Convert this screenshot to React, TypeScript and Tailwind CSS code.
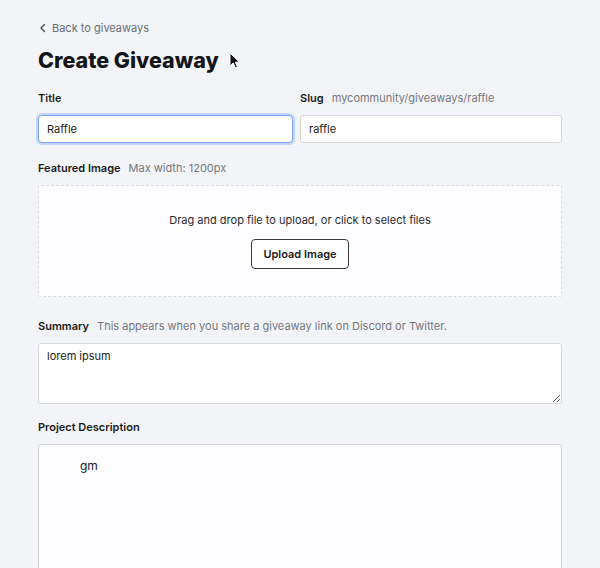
import React, { useState } from 'react';

const Label: React.FC<{ title: string; hint?: string }> = ({ title, hint }) => (
    <div className="flex items-baseline h-[17px] mb-[8px]">
        <span className="text-[11px] font-semibold text-[#1b1c20]">{title}</span>
        {hint && <span className="ml-[8px] text-[11px] text-[#75777f]">{hint}</span>}
    </div>
);

const App: React.FC = () => {
    const [title, setTitle] = useState('Raffle');
    const [slug, setSlug] = useState('raffle');
    const [summary, setSummary] = useState('lorem ipsum');

    return (
        <div className="bg-[#f3f4f8] font-['Inter',sans-serif] px-[38px] pt-[19px] overflow-hidden h-[568px]">
            {/* back link */}
            <div className="flex items-center h-[18px] text-[11px] text-[#6b6e76]">
                <svg width="8" height="10" viewBox="0 0 8 10" className="ml-[1px] mr-[5px]">
                    <path d="M5.5 1.5L2 5l3.5 3.5" fill="none" stroke="#55575e" strokeWidth="1.5" strokeLinecap="round" strokeLinejoin="round" />
                </svg>
                <span>Back to giveaways</span>
            </div>

            <div className="relative mt-[6px] h-[34px] flex items-center">
                <h1 className="text-[21.5px] font-extrabold text-[#141519]">Create Giveaway</h1>
                <svg width="12" height="18" viewBox="0 0 12 18" className="absolute left-[191px] top-[9px]">
                    <path d="M1 1v13l3.2-3 2.3 5 2-0.9-2.2-4.9H10.5z" fill="#111" stroke="#fff" strokeWidth="1" />
                </svg>
            </div>

            {/* title + slug */}
            <div className="grid grid-cols-[255px_1fr] gap-[7px] mt-[13px]">
                <div>
                    <Label title="Title" />
                    <input
                        value={title}
                        onChange={(e) => setTitle(e.target.value)}
                        className="w-full h-[28px] rounded-[4px] bg-white border border-[#7fa6e6] ring-2 ring-[#c3d6f5] px-[8px] text-[11px] text-[#1b1c20] outline-none"
                    />
                </div>
                <div>
                    <Label title="Slug" hint="mycommunity/giveaways/raffle" />
                    <input
                        value={slug}
                        onChange={(e) => setSlug(e.target.value)}
                        className="w-full h-[28px] rounded-[3px] bg-white border border-[#d5d7dc] px-[8px] text-[11px] text-[#1b1c20] outline-none"
                    />
                </div>
            </div>

            {/* featured image */}
            <div className="mt-[17px]">
                <Label title="Featured Image" hint="Max width: 1200px" />
                <div className="h-[112px] rounded-[3px] bg-[#fdfcfe] border border-dashed border-[#d9dbe0] flex flex-col items-center pt-[26px]">
                    <p className="text-[11px] leading-[16px] text-[#2a2b30]">Drag and drop file to upload, or click to select files</p>
                    <button className="mt-[11px] h-[30px] px-[11px] rounded-[4px] border border-[#3a3b40] bg-white text-[11px] font-semibold text-[#1b1c20]">
                        Upload Image
                    </button>
                </div>
            </div>

            {/* summary */}
            <div className="mt-[21px]">
                <Label title="Summary" hint="This appears when you share a giveaway link on Discord or Twitter." />
                <textarea
                    value={summary}
                    onChange={(e) => setSummary(e.target.value)}
                    className="block w-full h-[61px] rounded-[3px] bg-white border border-[#d5d7dc] px-[8px] py-[4px] text-[11px] text-[#1b1c20] outline-none"
                />
            </div>

            {/* description */}
            <div className="mt-[15px]">
                <Label title="Project Description" />
                <div className="h-[140px] rounded-[3px] bg-[#fdfcfe] border border-[#d5d7dc] pt-[12px] pl-[41px] text-[12px] text-[#1b1c20]">
                    gm
                </div>
            </div>
        </div>
    );
};

export default App;
